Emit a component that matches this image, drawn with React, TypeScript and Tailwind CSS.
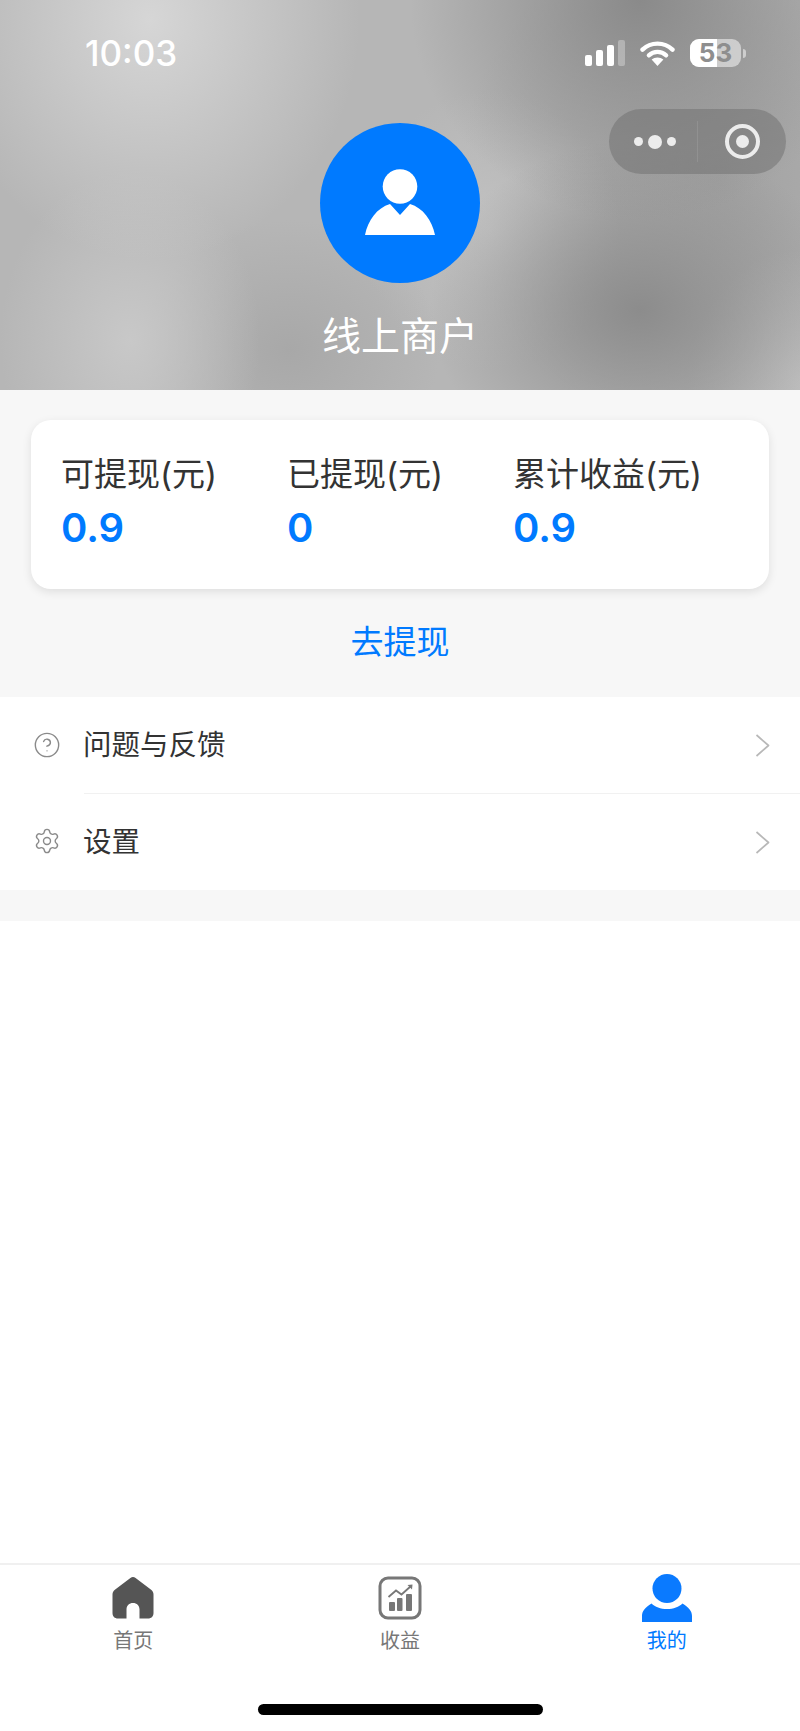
import { CircleHelp, Settings } from 'lucide-react'

const stats = [
  { label: '可提现(元)', value: '0.9' },
  { label: '已提现(元)', value: '0' },
  { label: '累计收益(元)', value: '0.9' },
]

function Chevron() {
  return (
    <svg width="15" height="23" viewBox="0 0 15 23" fill="none" className="text-[#b8b8b8]">
      <path d="M1.5 1 L13.5 11.5 L1.5 22" stroke="currentColor" strokeWidth="1.7" strokeLinejoin="round" />
    </svg>
  )
}

function Signal() {
  return (
    <div className="flex items-end gap-1 h-[26px]">
      <div className="w-[7px] h-[11px] rounded-[2px] bg-white" />
      <div className="w-[7px] h-[16px] rounded-[2px] bg-white" />
      <div className="w-[7px] h-[21px] rounded-[2px] bg-white" />
      <div className="w-[7px] h-[26px] rounded-[2px] bg-white/30" />
    </div>
  )
}

function Wifi() {
  return (
    <svg width="35" height="26" viewBox="0 0 35 26" fill="none">
      <path d="M2.5 9.6 C10.8 1.6 24.2 1.6 32.5 9.6" stroke="#fff" strokeWidth="4.4" strokeLinecap="round" />
      <path d="M8.8 15.4 C13.8 10.8 21.2 10.8 26.2 15.4" stroke="#fff" strokeWidth="4.2" strokeLinecap="round" />
      <path d="M17.5 26 L11.6 19.6 C15 16.8 20 16.8 23.4 19.6 Z" fill="#fff" />
    </svg>
  )
}

function Battery() {
  return (
    <div className="flex items-center gap-[2px]">
      <div className="relative w-[51px] h-[28px] rounded-[9px] bg-white/50 flex">
        <div className="w-[27px] h-full rounded-l-[9px] bg-white" />
        <div className="absolute inset-0 flex items-center justify-center text-[26px] leading-[28px] font-bold text-[#8e8e8e] font-['Inter',sans-serif]">
          53
        </div>
      </div>
      <div className="w-[3px] h-[9px] rounded-r-full bg-white/50" />
    </div>
  )
}

function Capsule() {
  return (
    <div className="absolute left-[609px] top-[109px] w-[177px] h-[65px] rounded-full bg-[#6e6e6e]/50 flex items-center">
      <div className="w-[88px] flex items-center justify-center gap-[5px] pl-1">
        <div className="w-[9px] h-[9px] rounded-full bg-[#ececec]" />
        <div className="w-[14px] h-[14px] rounded-full bg-[#ececec]" />
        <div className="w-[9px] h-[9px] rounded-full bg-[#ececec]" />
      </div>
      <div className="w-px h-[41px] bg-white/10" />
      <div className="flex-1 flex items-center justify-center">
        <div className="w-[35px] h-[35px] rounded-full border-[4px] border-[#ececec] flex items-center justify-center">
          <div className="w-[13px] h-[13px] rounded-full bg-[#ececec]" />
        </div>
      </div>
    </div>
  )
}

function HomeIcon() {
  return (
    <svg width="42" height="42" viewBox="0 0 42 42">
      <path
        d="M18.4 1 C20 -.2 22 -.2 23.6 1 L38.8 12.4 C40.6 13.8 41.5 15.2 41.5 17.5 L41.5 36 C41.5 39.4 39.4 41.5 36 41.5 L27.5 41.5 L27.5 32.5 C27.5 28.6 24.8 26 21 26 C17.2 26 14.5 28.6 14.5 32.5 L14.5 41.5 L6 41.5 C2.6 41.5 .5 39.4 .5 36 L.5 17.5 C.5 15.2 1.4 13.8 3.2 12.4 Z"
        fill="#555555"
      />
    </svg>
  )
}

function ChartIcon() {
  return (
    <svg width="44" height="44" viewBox="0 0 44 44" fill="none">
      <rect x="2" y="2" width="40" height="40" rx="8" stroke="#777777" strokeWidth="3" />
      <rect x="11" y="26" width="6" height="9" rx="1" fill="#777777" />
      <rect x="19" y="22" width="5.5" height="13" rx="1" fill="#777777" />
      <rect x="28" y="18" width="6" height="17" rx="1" fill="#777777" />
      <path d="M10.5 21 L18 14.5 L23.5 18.5 L33 10" stroke="#777777" strokeWidth="1.8" />
      <path d="M29.5 9 L34.5 8.5 L34 13.5 Z" fill="#777777" />
    </svg>
  )
}

function ProfileIcon() {
  return (
    <svg width="50" height="48" viewBox="0 0 50 48">
      <circle cx="25" cy="14.5" r="14.5" fill="#0a7aff" />
      <path
        d="M0 48 L0 42 C0 37 3 33.5 9.5 29.5 C13 33 18.5 35 25 35 C31.5 35 37 33 40.5 29.5 C47 33.5 50 37 50 42 L50 48 Z"
        fill="#0a7aff"
      />
    </svg>
  )
}

function Tab({ icon, label, active }: { icon: React.ReactNode; label: string; active?: boolean }) {
  return (
    <div className="flex-1 flex flex-col items-center">
      <div className="h-[56px] flex items-center justify-center">{icon}</div>
      <span className={active ? 'mt-px text-[20px] leading-[28px] text-[#007aff]' : 'mt-px text-[20px] leading-[28px] text-[#777777]'}>
        {label}
      </span>
    </div>
  )
}

export default function App() {
  return (
    <div className="w-[800px] h-[1731px] bg-white flex flex-col font-['Inter','Noto_Sans_CJK_SC',sans-serif]">
      <header className="relative h-[390px] shrink-0 bg-[#b6b6b6] bg-[radial-gradient(ellipse_210px_240px_at_150px_20px,#d6d6d6,transparent),radial-gradient(ellipse_130px_170px_at_130px_340px,#c8c8c8,transparent),radial-gradient(ellipse_230px_220px_at_640px_0px,#8a8a8a,transparent),radial-gradient(ellipse_210px_170px_at_640px_310px,#8c8c8c,transparent),radial-gradient(ellipse_150px_130px_at_290px_350px,#a8a8a8,transparent),radial-gradient(ellipse_130px_140px_at_490px_230px,#c2c2c2,transparent),radial-gradient(ellipse_110px_130px_at_800px_380px,#c2c2c2,transparent),radial-gradient(ellipse_260px_260px_at_720px_180px,#a2a2a2,transparent)]">
        <div className="flex items-center justify-between pl-[85px] pr-[54px] pt-[38px] h-[68px]">
          <span className="text-[35px] leading-[30px] font-medium text-white">10:03</span>
          <div className="flex items-center gap-[15px]">
            <Signal />
            <Wifi />
            <Battery />
          </div>
        </div>
        <Capsule />
        <div className="mt-[55px] flex flex-col items-center">
          <div className="w-[160px] h-[160px] rounded-full bg-[#007aff] flex items-center justify-center">
            <svg width="70" height="66" viewBox="0 0 70 66" className="-mt-[2px]">
              <circle cx="35" cy="17.5" r="17.3" fill="#fff" />
              <path d="M0 66 C3 51 12 39 25 35 L35 46 L45 35 C58 39 67 51 70 66 Z" fill="#fff" />
            </svg>
          </div>
          <div className="mt-[30px] text-[39px] leading-[46px] text-white">线上商户</div>
        </div>
      </header>

      <section className="bg-[#f7f7f7] h-[307px] shrink-0 px-[31px] pt-[30px]">
        <div className="h-[169px] rounded-[20px] bg-white shadow-[0_3px_10px_rgba(0,0,0,0.1)] pl-[30px] pt-[34px] grid grid-cols-[226px_226px_1fr]">
          {stats.map((s) => (
            <div key={s.label}>
              <div className="text-[33px] leading-[40px] text-[#333333]">{s.label}</div>
              <div className="mt-[10px] text-[40px] leading-[48px] font-semibold text-[#007aff]">{s.value}</div>
            </div>
          ))}
        </div>
        <div className="mt-[30px] text-center text-[33px] leading-[46px] text-[#007aff]">去提现</div>
      </section>

      <section className="bg-white shrink-0">
        <div className="h-[97px] flex items-center">
          <div className="w-[84px] flex justify-center pl-[10px] -mt-[2px]">
            <CircleHelp size={28} strokeWidth={1.2} className="text-[#8a8a8a]" />
          </div>
          <div className="flex-1 h-full flex items-center justify-between pr-[30px] border-b border-[#f1f1f1]">
            <span className="-ml-px text-[28.5px] text-[#333333]">问题与反馈</span>
            <Chevron />
          </div>
        </div>
        <div className="h-[96px] flex items-center">
          <div className="w-[84px] flex justify-center pl-[10px] -mt-[2px]">
            <Settings size={28} strokeWidth={1.2} className="text-[#8a8a8a]" />
          </div>
          <div className="flex-1 h-full flex items-center justify-between pr-[30px]">
            <span className="-ml-px text-[28.5px] text-[#333333]">设置</span>
            <Chevron />
          </div>
        </div>
      </section>

      <div className="h-[31px] shrink-0 bg-[#f7f7f7]" />
      <div className="flex-1" />

      <nav className="h-[168px] shrink-0 border-t-2 border-[#f0f0f0] bg-white flex flex-col">
        <div className="flex pt-[5px]">
          <Tab icon={<HomeIcon />} label="首页" />
          <Tab icon={<ChartIcon />} label="收益" />
          <Tab icon={<ProfileIcon />} label="我的" active />
        </div>
        <div className="mt-[49px] self-center w-[285px] h-[11px] rounded-full bg-black" />
      </nav>
    </div>
  )
}
